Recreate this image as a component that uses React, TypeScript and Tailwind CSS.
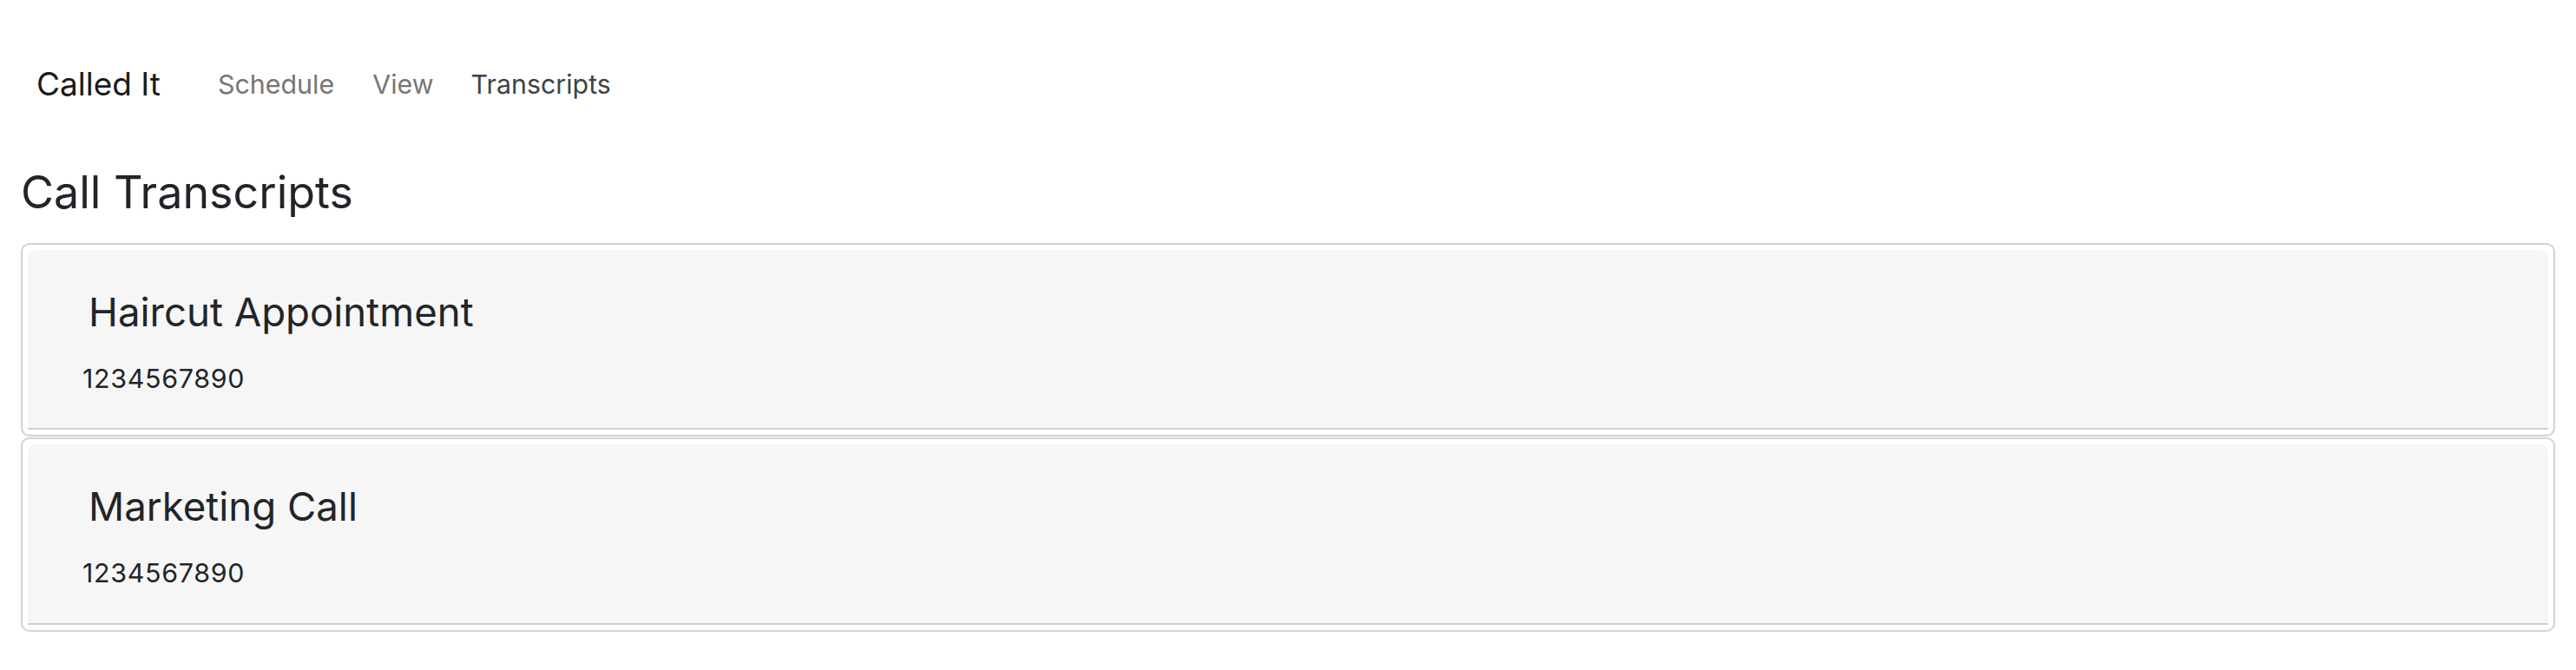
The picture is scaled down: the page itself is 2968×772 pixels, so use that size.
import {FC} from 'react';

const font = {fontFamily: 'Inter, "Noto Sans", sans-serif'};

const links = [
  {name: 'Schedule', active: false, ml: 'ml-[66px]'},
  {name: 'View', active: false, ml: 'ml-[44px]'},
  {name: 'Transcripts', active: true, ml: 'ml-[43px]'},
];

const calls = [
  {title: 'Haircut Appointment', phone: '1234567890'},
  {title: 'Marketing Call', phone: '1234567890'},
];

const TopNav: FC = () => (
  <nav className="flex flex-row items-start pt-[66px] pl-[42px]">
    <a className="mt-[3px] text-[37px] leading-[1.5] text-[#1a1a1a]">Called It</a>
    <ul className="mt-[9px] flex flex-row">
      {links.map(link => (
        <li key={link.name} className={link.ml}>
          <a className={`text-[30.4px] leading-[1.5] ${link.active ? 'text-[#424242]' : 'text-[#767676]'}`}>
            {link.name}
          </a>
        </li>
      ))}
    </ul>
  </nav>
);

const CallCard: FC<{title: string; phone: string}> = ({title, phone}) => (
  <li className="rounded-[10px] border-2 border-[#d2d2d2] p-[6px]">
    <div className="rounded-t-[8px] border-b-2 border-[#d0d0d0] bg-[#f6f6f6] pt-[45px] pb-[34px]">
      <h4 className="pl-[70px] text-[45.6px] leading-[1.2] font-normal text-[#212529]">{title}</h4>
      <p className="mt-[26px] pl-[63px] text-[30.4px] leading-[1.5] tracking-[0.7px] text-[#212529]">{phone}</p>
    </div>
  </li>
);

export default function App() {
  return (
    <div className="min-h-screen w-full bg-white" style={font}>
      <TopNav />
      <main className="px-[24px]">
        <h3 className="mt-[66px] mb-[27px] text-[52px] leading-[1.2] font-normal text-[#212529]">Call Transcripts</h3>
        <ul className="flex flex-col gap-px">
          {calls.map(c => (
            <CallCard key={c.title} title={c.title} phone={c.phone} />
          ))}
        </ul>
      </main>
    </div>
  );
}
